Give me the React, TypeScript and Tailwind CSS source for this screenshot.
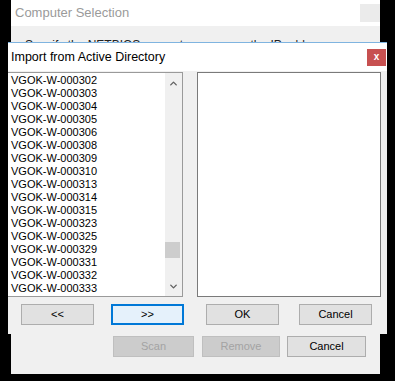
import { ChevronUp, ChevronDown } from "lucide-react";

const ITEMS = [
  "VGOK-W-000302",
  "VGOK-W-000303",
  "VGOK-W-000304",
  "VGOK-W-000305",
  "VGOK-W-000306",
  "VGOK-W-000308",
  "VGOK-W-000309",
  "VGOK-W-000310",
  "VGOK-W-000313",
  "VGOK-W-000314",
  "VGOK-W-000315",
  "VGOK-W-000323",
  "VGOK-W-000325",
  "VGOK-W-000329",
  "VGOK-W-000331",
  "VGOK-W-000332",
  "VGOK-W-000333",
];

const sans = "font-['Liberation_Sans',Arial,sans-serif]";

function WinButton({
  label,
  width,
  disabled,
  focused,
}: {
  label: string;
  width: string;
  disabled?: boolean;
  focused?: boolean;
}) {
  return (
    <button
      className={`${width} h-[21px] flex items-center justify-center text-[11px] leading-none border ${
        disabled
          ? "bg-[#cccccc] border-[#bfbfbf] text-[#a3a3a3]"
          : focused
          ? "bg-[#e5f1fb] border-[#0078d7] border-2 text-black"
          : "bg-[#e1e1e1] border-[#adadad] text-black"
      }`}
    >
      {label}
    </button>
  );
}

export default function App() {
  return (
    <div className={`relative w-[395px] h-[381px] bg-black overflow-hidden ${sans}`}>
      {/* Background window: Computer Selection */}
      <div className="absolute left-[11px] top-0 w-[369px] h-[374px] bg-[#f0f0f0] flex flex-col">
        <div className="h-[26px] bg-white flex items-center justify-between pl-[4px]">
          <span className="text-[13px] text-[#9a9a9a]">Computer Selection</span>
          <div className="w-[20px] h-[18px] bg-[#ebebeb]" />
        </div>
        <div className="pl-[14px] pt-[13px] text-[12px] leading-[12px] text-[#222] whitespace-nowrap">
          Specify the NETBIOS computer names or the IP address
        </div>
        <div className="flex-1" />
        <div className="flex items-center pl-[102px] pb-[17px]">
          <WinButton label="Scan" width="w-[81px]" disabled />
          <div className="w-[8px]" />
          <WinButton label="Remove" width="w-[78px]" disabled />
          <div className="w-[7px]" />
          <WinButton label="Cancel" width="w-[79px]" />
        </div>
      </div>

      {/* Foreground dialog: Import from Active Directory */}
      <div className="absolute left-[8px] top-[42px] w-[379px] h-[292px] bg-[#f0f0f0] border-t border-[#7fb4e0] flex flex-col">
        <div className="h-[28px] bg-white flex items-center justify-between pl-[3px] pr-[1px]">
          <span className="text-[12.5px] text-black">Import from Active Directory</span>
          <div className="w-[19px] h-[17px] bg-[#c75050] flex items-center justify-center text-white text-[10px] font-bold leading-none pb-[1px]">
            x
          </div>
        </div>

        <div className="flex pt-[1px]">
          {/* Left list */}
          <div className="w-[175px] h-[225px] bg-white border-t border-r border-b border-[#9a9a9a] flex">
            <div className="flex-1 pl-[3px] pt-[1px] overflow-hidden">
              {ITEMS.map((it) => (
                <div key={it} className="h-[13px] leading-[13px] text-[11px] text-black whitespace-nowrap">
                  {it}
                </div>
              ))}
            </div>
            <div className="w-[17px] bg-[#f0f0f0] flex flex-col items-center">
              <ChevronUp size={11} strokeWidth={3} className="text-[#606060] mt-[5px]" />
              <div className="flex-1 w-full flex flex-col">
                <div className="h-[153px]" />
                <div className="h-[16px] w-[15px] bg-[#cdcdcd]" />
              </div>
              <ChevronDown size={11} strokeWidth={3} className="text-[#606060] mb-[4px]" />
            </div>
          </div>

          <div className="w-[14px]" />

          {/* Right list */}
          <div className="w-[184px] h-[225px] bg-white border border-[#7a7a7a]" />
        </div>

        <div className="flex items-center pl-[13px] pt-[7px]">
          <WinButton label="<<" width="w-[73px]" />
          <div className="w-[17px]" />
          <WinButton label=">>" width="w-[73px]" focused />
          <div className="w-[22px]" />
          <WinButton label="OK" width="w-[73px]" />
          <div className="w-[20px]" />
          <WinButton label="Cancel" width="w-[73px]" />
        </div>
      </div>
    </div>
  );
}
